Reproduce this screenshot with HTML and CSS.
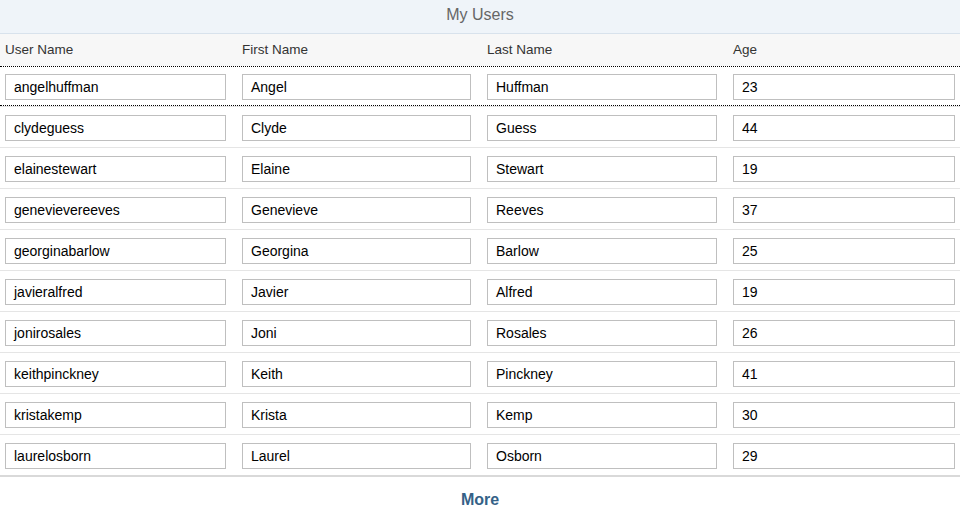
FILE: index.html
```html
<!DOCTYPE html>
<html>
<head>
<meta charset="utf-8">
<link rel="stylesheet" href="styles.css">
</head>
<body>
<div class="page">
  <div class="title">My Users</div>
  <div class="table">
    <div class="row head">
      <div class="hcell">User Name</div>
      <div class="hcell">First Name</div>
      <div class="hcell">Last Name</div>
      <div class="hcell">Age</div>
    </div>
    <div class="row item focused">
      <div class="inp">angelhuffman</div><div class="inp">Angel</div><div class="inp">Huffman</div><div class="inp">23</div>
    </div>
    <div class="row item">
      <div class="inp">clydeguess</div><div class="inp">Clyde</div><div class="inp">Guess</div><div class="inp">44</div>
    </div>
    <div class="row item">
      <div class="inp">elainestewart</div><div class="inp">Elaine</div><div class="inp">Stewart</div><div class="inp">19</div>
    </div>
    <div class="row item">
      <div class="inp">genevievereeves</div><div class="inp">Genevieve</div><div class="inp">Reeves</div><div class="inp">37</div>
    </div>
    <div class="row item">
      <div class="inp">georginabarlow</div><div class="inp">Georgina</div><div class="inp">Barlow</div><div class="inp">25</div>
    </div>
    <div class="row item">
      <div class="inp">javieralfred</div><div class="inp">Javier</div><div class="inp">Alfred</div><div class="inp">19</div>
    </div>
    <div class="row item">
      <div class="inp">jonirosales</div><div class="inp">Joni</div><div class="inp">Rosales</div><div class="inp">26</div>
    </div>
    <div class="row item">
      <div class="inp">keithpinckney</div><div class="inp">Keith</div><div class="inp">Pinckney</div><div class="inp">41</div>
    </div>
    <div class="row item">
      <div class="inp">kristakemp</div><div class="inp">Krista</div><div class="inp">Kemp</div><div class="inp">30</div>
    </div>
    <div class="row item last">
      <div class="inp">laurelosborn</div><div class="inp">Laurel</div><div class="inp">Osborn</div><div class="inp">29</div>
    </div>
  </div>
  <div class="more">More</div>
</div>
</body>
</html>
```
FILE: styles.css
```css
* { box-sizing: border-box; }
html, body { margin: 0; padding: 0; background: #fff; }
body { font-family: "Liberation Sans", Arial, sans-serif; color: #32363a; }
.page { width: 960px; }
.title {
  height: 34px;
  background: #eff4f9;
  border-bottom: 1px solid #d8e2ec;
  text-align: center;
  font-size: 16px;
  line-height: 29px;
  color: #666;
}
.row {
  display: grid;
  grid-template-columns: 221px 229px 230px 222px;
  column-gap: 16px;
  padding: 0 5px;
}
.head {
  height: 32px;
  background: #f7f7f7;
  align-items: center;
}
.hcell { font-size: 13.5px; line-height: 30px; color: #333; }
.item {
  position: relative;
  height: 41px;
  padding-top: 8px;
  border-bottom: 1px solid #e5e5e5;
  align-items: start;
}
.item.focused::after {
  content: "";
  position: absolute;
  left: 0; right: 0; top: 0; bottom: 0;
  border-top: 1px dotted #000;
  border-bottom: 1px dotted #000;
}
.item.last { border-bottom: 2px solid #d9d9d9; height: 42px; }
.inp {
  height: 26px;
  border: 1px solid #bfbfbf;
  background: #fff;
  padding: 0 8px;
  font-size: 14px;
  line-height: 24px;
  color: #000;
  white-space: nowrap;
}
.more {
  text-align: center;
  font-weight: bold;
  font-size: 16px;
  color: #346187;
  height: 45px;
  line-height: 45px;
}
```
